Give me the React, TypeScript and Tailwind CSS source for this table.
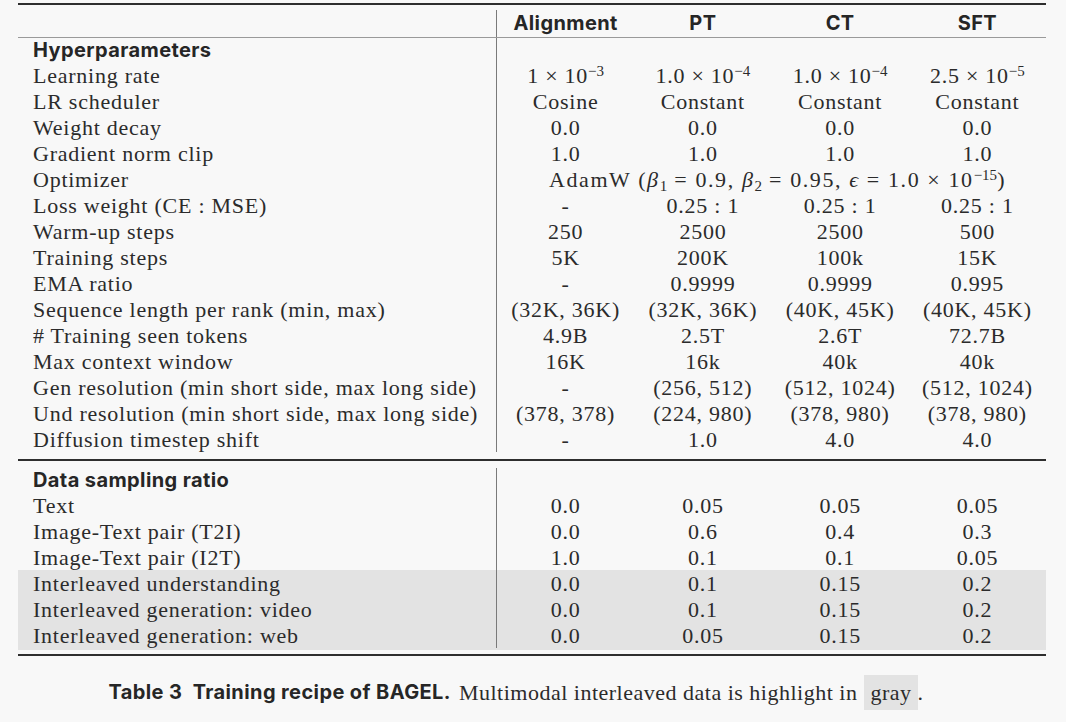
import React from "react";

type Cell = React.ReactNode;

interface RowProps {
  label: Cell;
  values?: Cell[];
  span?: Cell;
  gray?: boolean;
  heading?: boolean;
}

const serif = "font-['Liberation_Serif',serif]";
const sans = "font-['Inter',sans-serif]";
const boldSans = sans + " font-bold text-[20px] tracking-[0.4px] text-[#262626]";

function Pow({ base, exp }: { base: string; exp: string }) {
  return (
    <span>
      {base} × 10
      <sup className="text-[15px] tracking-normal">{exp}</sup>
    </span>
  );
}

function Row({ label, values, span, gray, heading }: RowProps) {
  return (
    <div
      className={
        "grid grid-cols-[479px_repeat(4,1fr)] items-stretch leading-[20px] " +
        (heading ? "h-[24px] " : "h-[26px] ") +
        (gray ? "bg-[#e3e3e3]" : "")
      }
    >
      <div
        className={
          "flex items-center pl-[15px] border-r border-[#7a7a7a] whitespace-nowrap " +
          (heading ? boldSans : "pt-[2px]")
        }
      >
        {label}
      </div>
      {span ? (
        <div className="col-span-4 flex items-center justify-center whitespace-nowrap pl-[12px] pt-[2px] tracking-[1.6px]">
          {span}
        </div>
      ) : (
        (values ?? []).map((v, i) => (
          <div key={i} className="flex items-center justify-center whitespace-nowrap pt-[2px]">
            {v}
          </div>
        ))
      )}
    </div>
  );
}

const hyper: { label: string; values?: Cell[]; span?: Cell }[] = [
  {
    label: "Learning rate",
    values: [
      <Pow base="1" exp="−3" />,
      <Pow base="1.0" exp="−4" />,
      <Pow base="1.0" exp="−4" />,
      <Pow base="2.5" exp="−5" />,
    ],
  },
  { label: "LR scheduler", values: ["Cosine", "Constant", "Constant", "Constant"] },
  { label: "Weight decay", values: ["0.0", "0.0", "0.0", "0.0"] },
  { label: "Gradient norm clip", values: ["1.0", "1.0", "1.0", "1.0"] },
  {
    label: "Optimizer",
    span: (
      <span>
        AdamW (<i>β</i>
        <sub className="text-[15px] tracking-normal">1</sub> = 0.9, <i>β</i>
        <sub className="text-[15px] tracking-normal">2</sub> = 0.95, <i>ϵ</i> = 1.0 × 10
        <sup className="text-[15px] tracking-normal">−15</sup>)
      </span>
    ),
  },
  { label: "Loss weight (CE : MSE)", values: ["-", "0.25 : 1", "0.25 : 1", "0.25 : 1"] },
  { label: "Warm-up steps", values: ["250", "2500", "2500", "500"] },
  { label: "Training steps", values: ["5K", "200K", "100k", "15K"] },
  { label: "EMA ratio", values: ["-", "0.9999", "0.9999", "0.995"] },
  {
    label: "Sequence length per rank (min, max)",
    values: ["(32K, 36K)", "(32K, 36K)", "(40K, 45K)", "(40K, 45K)"],
  },
  { label: "# Training seen tokens", values: ["4.9B", "2.5T", "2.6T", "72.7B"] },
  { label: "Max context window", values: ["16K", "16k", "40k", "40k"] },
  {
    label: "Gen resolution (min short side, max long side)",
    values: ["-", "(256, 512)", "(512, 1024)", "(512, 1024)"],
  },
  {
    label: "Und resolution (min short side, max long side)",
    values: ["(378, 378)", "(224, 980)", "(378, 980)", "(378, 980)"],
  },
  { label: "Diffusion timestep shift", values: ["-", "1.0", "4.0", "4.0"] },
];

const data: { label: string; values: Cell[]; gray?: boolean }[] = [
  { label: "Text", values: ["0.0", "0.05", "0.05", "0.05"] },
  { label: "Image-Text pair (T2I)", values: ["0.0", "0.6", "0.4", "0.3"] },
  { label: "Image-Text pair (I2T)", values: ["1.0", "0.1", "0.1", "0.05"] },
  { label: "Interleaved understanding", values: ["0.0", "0.1", "0.15", "0.2"], gray: true },
  { label: "Interleaved generation: video", values: ["0.0", "0.1", "0.15", "0.2"], gray: true },
  { label: "Interleaved generation: web", values: ["0.0", "0.05", "0.15", "0.2"], gray: true },
];

export default function App() {
  return (
    <div
      className={
        "w-[1066px] h-[722px] bg-[#f8f8f8] text-[#2b2b2b] overflow-hidden " +
        serif +
        " text-[22px] tracking-[0.75px]"
      }
    >
      <div className="pl-[18px] pt-[3px] w-[1046px]">
        <div className="border-t-2 border-[#2e2e2e]">
          {/* header */}
          <div
            className={
              "grid grid-cols-[479px_repeat(4,1fr)] h-[33px] leading-[24px] border-b border-[#9a9a9a] " + boldSans
            }
          >
            <div className="self-end h-[27px] border-r border-[#7a7a7a]" />
            {["Alignment", "PT", "CT", "SFT"].map((h) => (
              <div key={h} className="flex items-center justify-center pt-[3px]">
                {h}
              </div>
            ))}
          </div>

          <Row heading label="Hyperparameters" values={["", "", "", ""]} />
          {hyper.map((r) => (
            <Row key={r.label} label={r.label} values={r.values} span={r.span} />
          ))}

          <div className="h-[7px]" />
          <div className="h-[1.5px] bg-[#2e2e2e]" />
          <div className="h-[7px]" />

          <Row heading label="Data sampling ratio" values={["", "", "", ""]} />
          {data.map((r) => (
            <Row key={r.label} label={r.label} values={r.values} gray={r.gray} />
          ))}
          <div className="h-[2px] bg-[#e3e3e3]" />
          <div className="h-[4px]" />
          <div className="h-[2px] bg-[#2e2e2e]" />
        </div>
      </div>

      <div className="flex justify-center items-center mt-[19px] pr-[34px] whitespace-nowrap tracking-[0.5px]">
        <span className={boldSans}>Table 3&nbsp;&nbsp;Training recipe of BAGEL.</span>
        <span className="ml-[8px]">Multimodal interleaved data is highlight in</span>
        <span className="ml-[7px] bg-[#e3e3e3] px-[6px] py-[1px]">gray</span>
        <span>.</span>
      </div>
    </div>
  );
}
